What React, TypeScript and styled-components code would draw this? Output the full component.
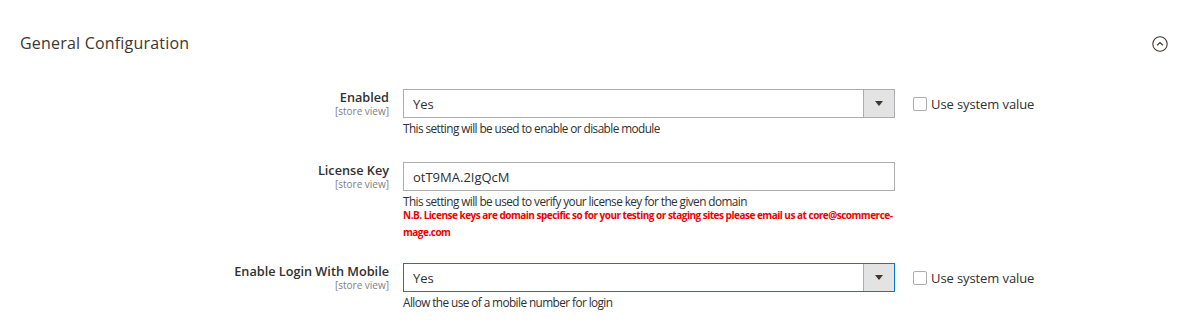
import React from "react";
import styled, { createGlobalStyle } from "styled-components";

const Global = createGlobalStyle`
  html, body { margin: 0; padding: 0; background: #fff; }
  body { font-family: "Open Sans", "Noto Sans", sans-serif; color: #303030; }
`;

const Page = styled.div`
  width: 1200px;
  height: 331px;
  overflow: hidden;
  background: #fff;
`;

const Header = styled.div`
  display: flex;
  align-items: center;
  justify-content: space-between;
  height: 30px;
  margin-top: 28px;
  padding: 0 32px 0 20px;
`;

const Title = styled.h3`
  margin: 0;
  font-size: 16px;
  font-weight: 400;
  color: #41362f;
  letter-spacing: 0.2px;
`;

const Toggle = styled.span`
  display: inline-flex;
  width: 16px;
  height: 16px;
  margin-top: 1px;
`;

const Form = styled.div`
  display: flex;
  flex-direction: column;
  gap: 26px;
  margin-top: 31px;
`;

const Row = styled.div`
  display: grid;
  grid-template-columns: 389px 492px auto;
  column-gap: 14px;
  align-items: start;
`;

const LabelCell = styled.div`
  display: flex;
  flex-direction: column;
  align-items: flex-end;
  text-align: right;
`;

const LabelText = styled.span`
  font-size: 12.7px;
  font-weight: 600;
  line-height: 17px;
  color: #303030;
`;

const Scope = styled.span`
  font-size: 10px;
  line-height: 11px;
  color: #808080;
`;

const Control = styled.div`
  display: flex;
  flex-direction: column;
`;

const Field = styled.div<{ $focused?: boolean }>`
  display: flex;
  height: 29px;
  box-sizing: border-box;
  border: 1px solid ${(p) => (p.$focused ? "#007bdb" : "#adadad")};
  background: #fff;
`;

const Value = styled.span`
  flex: 1;
  display: flex;
  align-items: center;
  padding-left: 9px;
  font-size: 13px;
  color: #303030;
`;

const ArrowButton = styled.span`
  width: 30px;
  display: flex;
  align-items: center;
  justify-content: center;
  background: #e3e3e3;
  border-left: 1px solid #adadad;
`;

const Arrow = styled.span`
  width: 0;
  height: 0;
  border-left: 4px solid transparent;
  border-right: 4px solid transparent;
  border-top: 5px solid #41362f;
`;

const Note = styled.div`
  margin-top: 3px;
  font-size: 11.8px;
  letter-spacing: -0.58px;
  line-height: 15px;
  color: #303030;
`;

const Warning = styled.div`
  margin: -2px -4px -4px 0;
  font-size: 10px;
  letter-spacing: -0.5px;
  font-weight: 700;
  line-height: 17px;
  color: #f00000;
`;

const SystemCell = styled.label`
  display: flex;
  align-items: center;
  gap: 4px;
  height: 29px;
  margin-left: 4px;
  font-size: 13px;
  letter-spacing: -0.1px;
  color: #303030;
`;

const Box = styled.span`
  width: 14px;
  height: 14px;
  box-sizing: border-box;
  border: 1px solid #adadad;
  border-radius: 2px;
  background: #fff;
`;

type RowProps = {
  label: string;
  value: string;
  select?: boolean;
  focused?: boolean;
  note: string;
  warning?: string;
  system?: boolean;
};

const ConfigRow = ({ label, value, select, focused, note, warning, system }: RowProps) => (
  <Row>
    <LabelCell>
      <LabelText>{label}</LabelText>
      <Scope>[store view]</Scope>
    </LabelCell>
    <Control>
      <Field $focused={focused}>
        <Value>{value}</Value>
        {select && (
          <ArrowButton>
            <Arrow />
          </ArrowButton>
        )}
      </Field>
      <Note>{note}</Note>
      {warning && <Warning>{warning}</Warning>}
    </Control>
    {system ? (
      <SystemCell>
        <Box />
        Use system value
      </SystemCell>
    ) : (
      <span />
    )}
  </Row>
);

export default function App() {
  return (
    <Page>
      <Global />
      <Header>
        <Title>General Configuration</Title>
        <Toggle>
          <svg width="16" height="16" viewBox="0 0 16 16">
            <circle cx="8" cy="8" r="7.2" fill="none" stroke="#41362f" strokeWidth="1.1" />
            <path d="M5.2 9.3 L8 6.6 L10.8 9.3" fill="none" stroke="#41362f" strokeWidth="1.2" />
          </svg>
        </Toggle>
      </Header>
      <Form>
        <ConfigRow
          label="Enabled"
          value="Yes"
          select
          note="This setting will be used to enable or disable module"
          system
        />
        <ConfigRow
          label="License Key"
          value="otT9MA.2IgQcM"
          note="This setting will be used to verify your license key for the given domain"
          warning="N.B. License keys are domain specific so for your testing or staging sites please email us at core@scommerce-mage.com"
        />
        <ConfigRow
          label="Enable Login With Mobile"
          value="Yes"
          select
          focused
          note="Allow the use of a mobile number for login"
          system
        />
      </Form>
    </Page>
  );
}
